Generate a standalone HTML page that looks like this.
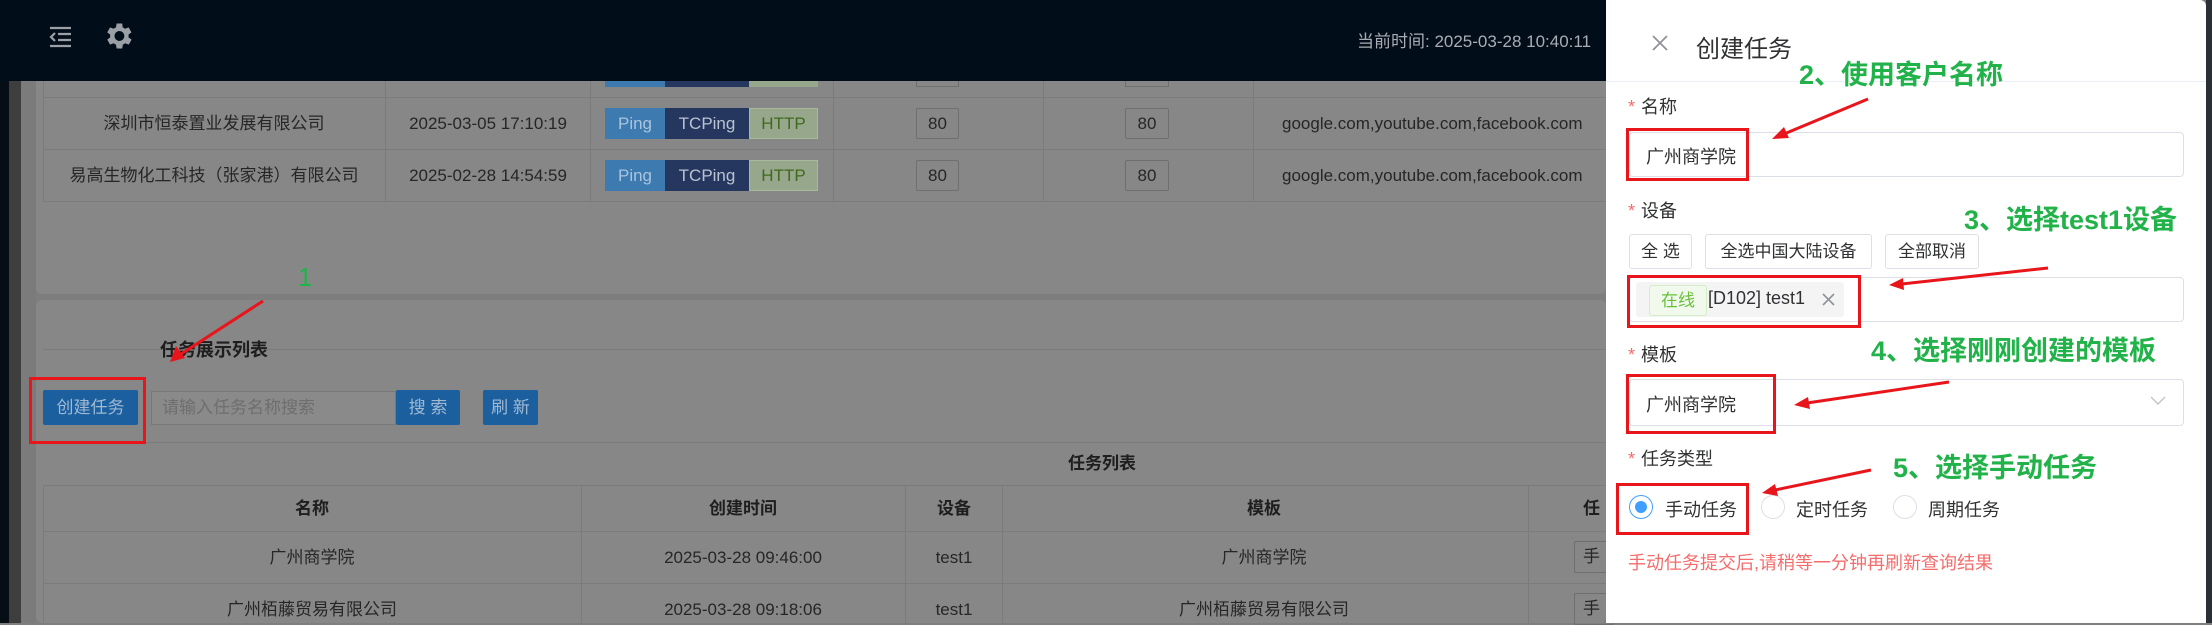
<!DOCTYPE html>
<html><head><meta charset="utf-8"><style>
*{margin:0;padding:0;box-sizing:border-box}
body{width:2212px;height:623px;overflow:hidden;position:relative;background:#7e7e7e;font-family:"Liberation Sans","Noto Sans CJK SC",sans-serif;color:#262626}
.a{position:absolute}
.t{position:absolute;white-space:nowrap;font-size:17px;line-height:20px}
.c{transform:translateX(-50%)}
.hl{position:absolute;height:1px;background:#7b7b7b}
.vl{position:absolute;width:1px;background:#7b7b7b}
.g{color:#22b24a;font-weight:bold;font-size:27px;position:absolute;white-space:nowrap;line-height:30px}
.rb{position:absolute;border:3px solid #e8151b}
.lab{position:absolute;font-size:18px;color:#303133;white-space:nowrap}
.lab b{color:#f56c6c;font-weight:normal;margin-right:6px}
.inp{position:absolute;border:1px solid #dcdfe6;border-radius:4px;background:#fff}
.btn{position:absolute;border:1px solid #dcdfe6;border-radius:3px;background:#fff;font-size:17px;color:#303133;text-align:center;line-height:33px}
</style></head><body>
<div class="a" style="left:0;top:0;width:9px;height:623px;background:#070d14"></div>
<div class="a" style="left:9px;top:81px;width:12px;height:542px;background:#3e3e3e"></div>
<div class="a" style="left:21px;top:81px;width:15px;height:542px;background:#7b7b7b"></div>
<div class="a" style="left:36px;top:81px;width:1570px;height:213px;background:#878787;border-radius:0 0 6px 6px"></div>
<div class="a" style="left:36px;top:300px;width:1570px;height:323px;background:#878787;border-radius:6px"></div>
<div class="hl" style="left:43px;top:97px;width:1563px"></div>
<div class="hl" style="left:43px;top:149px;width:1563px"></div>
<div class="hl" style="left:43px;top:201px;width:1563px"></div>
<div class="vl" style="left:43px;top:81px;height:120px"></div>
<div class="vl" style="left:385px;top:81px;height:120px"></div>
<div class="vl" style="left:590px;top:81px;height:120px"></div>
<div class="vl" style="left:833px;top:81px;height:120px"></div>
<div class="vl" style="left:1043px;top:81px;height:120px"></div>
<div class="vl" style="left:1253px;top:81px;height:120px"></div>
<div class="t c" style="left:214px;top:114px">深圳市恒泰置业发展有限公司</div>
<div class="t c" style="left:214px;top:166px">易高生物化工科技（张家港）有限公司</div>
<div class="t c" style="left:488px;top:114px">2025-03-05 17:10:19</div>
<div class="t c" style="left:488px;top:166px">2025-02-28 14:54:59</div>
<div class="a" style="left:605px;top:81px;width:60px;height:6px;background:#3d7ab0"></div>
<div class="a" style="left:665px;top:81px;width:84px;height:6px;background:#25375f"></div>
<div class="a" style="left:749px;top:81px;width:69px;height:6px;background:#97a78c"></div>
<div class="a" style="left:916px;top:81px;width:43px;height:6px;border:1px solid #6f6f6f;border-top:0"></div>
<div class="a" style="left:1125px;top:81px;width:44px;height:6px;border:1px solid #6f6f6f;border-top:0"></div>
<div class="a" style="left:605px;top:108px;width:60px;height:31px;background:#3d7ab0;color:#a8c4de;font-size:17px;line-height:31px;text-align:center">Ping</div>
<div class="a" style="left:665px;top:108px;width:84px;height:31px;background:#25375f;color:#b9c2d2;font-size:17px;line-height:31px;text-align:center">TCPing</div>
<div class="a" style="left:749px;top:108px;width:69px;height:31px;background:#97a78c;border:1px solid #a9b99c;color:#3f6a1d;font-size:17px;line-height:29px;text-align:center">HTTP</div>
<div class="a" style="left:605px;top:160px;width:60px;height:31px;background:#3d7ab0;color:#a8c4de;font-size:17px;line-height:31px;text-align:center">Ping</div>
<div class="a" style="left:665px;top:160px;width:84px;height:31px;background:#25375f;color:#b9c2d2;font-size:17px;line-height:31px;text-align:center">TCPing</div>
<div class="a" style="left:749px;top:160px;width:69px;height:31px;background:#97a78c;border:1px solid #a9b99c;color:#3f6a1d;font-size:17px;line-height:29px;text-align:center">HTTP</div>
<div class="a" style="left:916px;top:108px;width:43px;height:31px;border:1px solid #6f6f6f;border-radius:2px;font-size:17px;line-height:29px;text-align:center">80</div>
<div class="a" style="left:1125px;top:108px;width:44px;height:31px;border:1px solid #6f6f6f;border-radius:2px;font-size:17px;line-height:29px;text-align:center">80</div>
<div class="a" style="left:916px;top:160px;width:43px;height:31px;border:1px solid #6f6f6f;border-radius:2px;font-size:17px;line-height:29px;text-align:center">80</div>
<div class="a" style="left:1125px;top:160px;width:44px;height:31px;border:1px solid #6f6f6f;border-radius:2px;font-size:17px;line-height:29px;text-align:center">80</div>
<div class="t" style="left:1282px;top:114px">google.com,youtube.com,facebook.com</div>
<div class="t" style="left:1282px;top:166px">google.com,youtube.com,facebook.com</div>
<div class="g" style="left:298px;top:262px;font-weight:normal;font-size:26px">1</div>
<div class="hl" style="left:43px;top:349px;width:1563px"></div>
<div class="t" style="left:160px;top:340px;font-size:18px;font-weight:bold;color:#1e1e1e">任务展示列表</div>
<div class="a" style="left:43px;top:390px;width:95px;height:35px;background:#1c5f9f;border-radius:2px;color:#9fb9d3;font-size:17px;line-height:35px;text-align:center">创建任务</div>
<div class="a" style="left:151px;top:391px;width:245px;height:34px;border:1px solid #777;background:#8a8a8a;color:#6e6e6e;font-size:17px;line-height:32px;padding-left:10px">请输入任务名称搜索</div>
<div class="a" style="left:396px;top:390px;width:64px;height:35px;background:#1c5f9f;border-radius:2px;color:#9fb9d3;font-size:17px;line-height:35px;text-align:center">搜 索</div>
<div class="a" style="left:483px;top:390px;width:55px;height:35px;background:#1c5f9f;border-radius:2px;color:#9fb9d3;font-size:17px;line-height:35px;text-align:center">刷 新</div>
<div class="hl" style="left:43px;top:442px;width:1563px"></div>
<div class="t c" style="left:1102px;top:454px;font-weight:bold;color:#1e1e1e">任务列表</div>
<div class="hl" style="left:43px;top:485px;width:1563px"></div>
<div class="hl" style="left:43px;top:531px;width:1563px"></div>
<div class="hl" style="left:43px;top:583px;width:1563px"></div>
<div class="vl" style="left:43px;top:485px;height:138px"></div>
<div class="vl" style="left:581px;top:485px;height:138px"></div>
<div class="vl" style="left:905px;top:485px;height:138px"></div>
<div class="vl" style="left:1002px;top:485px;height:138px"></div>
<div class="vl" style="left:1528px;top:485px;height:138px"></div>
<div class="t c" style="left:312px;top:499px;font-weight:bold;color:#1e1e1e">名称</div>
<div class="t c" style="left:743px;top:499px;font-weight:bold;color:#1e1e1e">创建时间</div>
<div class="t c" style="left:954px;top:499px;font-weight:bold;color:#1e1e1e">设备</div>
<div class="t c" style="left:1264px;top:499px;font-weight:bold;color:#1e1e1e">模板</div>
<div class="t" style="left:1583px;top:499px;font-weight:bold;color:#1e1e1e">任</div>
<div class="t c" style="left:312px;top:548px">广州商学院</div>
<div class="t c" style="left:743px;top:548px">2025-03-28 09:46:00</div>
<div class="t c" style="left:954px;top:548px">test1</div>
<div class="t c" style="left:1264px;top:548px">广州商学院</div>
<div class="t c" style="left:312px;top:600px">广州栢藤贸易有限公司</div>
<div class="t c" style="left:743px;top:600px">2025-03-28 09:18:06</div>
<div class="t c" style="left:954px;top:600px">test1</div>
<div class="t c" style="left:1264px;top:600px">广州栢藤贸易有限公司</div>
<div class="a" style="left:1574px;top:541px;width:40px;height:32px;border:1px solid #6f6f6f;border-radius:2px;font-size:17px;line-height:30px;padding-left:8px">手</div>
<div class="a" style="left:1574px;top:593px;width:40px;height:32px;border:1px solid #6f6f6f;border-radius:2px;font-size:17px;line-height:30px;padding-left:8px">手</div>
<div class="rb" style="left:29px;top:377px;width:117px;height:67px"></div>
<div class="a" style="left:0;top:0;width:1606px;height:81px;background:#010d19"></div>
<svg class="a" style="left:49px;top:25px" width="24" height="24" viewBox="0 0 24 24"><g stroke="#9aa0a6" stroke-width="2.2" fill="none"><path d="M1 3h21M9 9h13M9 15h13M1 21h21"/><path d="M6 8l-4 4 4 4"/></g></svg>
<svg class="a" style="left:101px;top:19px" width="34" height="34" viewBox="0 0 24 24"><path fill="#9aa0a6" d="M19.4 13a7.5 7.5 0 000-2l2.1-1.6-2-3.5-2.5 1a7.4 7.4 0 00-1.7-1L15 3.2h-4l-.4 2.7a7.4 7.4 0 00-1.7 1l-2.5-1-2 3.5L6.5 11a7.5 7.5 0 000 2l-2.1 1.6 2 3.5 2.5-1a7.4 7.4 0 001.7 1l.4 2.7h4l.4-2.7a7.4 7.4 0 001.7-1l2.5 1 2-3.5zM13 15.5A3.5 3.5 0 1113 8.5a3.5 3.5 0 010 7z"/></svg>
<div class="t" style="left:1357px;top:32px;color:#a9adb3;font-size:17px">当前时间: 2025-03-28 10:40:11</div>
<svg class="a" style="left:0;top:0" width="1606" height="623"><path d="M263 301L178 356" stroke="#e8151b" stroke-width="3"/><path d="M170 362l6-16 9 12z" fill="#e8151b"/></svg>
<div class="a" style="left:1606px;top:0;width:600px;height:623px;background:#fff;border-radius:0 6px 0 0"></div>
<div class="a" style="left:2206px;top:0;width:6px;height:623px;background:#2a2f36"></div>
<svg class="a" style="left:1652px;top:35px" width="16" height="16"><path d="M1 1L15 15M15 1L1 15" stroke="#909399" stroke-width="1.8"/></svg>
<div class="a" style="left:1696px;top:29px;font-size:24px;color:#303133;white-space:nowrap">创建任务</div>
<div class="hl" style="left:1606px;top:81px;width:600px;background:#ebeef5"></div>
<div class="lab" style="left:1628px;top:93px"><b>*</b>名称</div>
<div class="inp" style="left:1629px;top:132px;width:555px;height:45px"></div>
<div class="a" style="left:1646px;top:143px;font-size:18px;color:#303133">广州商学院</div>
<div class="lab" style="left:1628px;top:197px"><b>*</b>设备</div>
<div class="btn" style="left:1629px;top:234px;width:63px;height:35px">全 选</div>
<div class="btn" style="left:1705px;top:234px;width:167px;height:35px">全选中国大陆设备</div>
<div class="btn" style="left:1885px;top:234px;width:94px;height:35px">全部取消</div>
<div class="inp" style="left:1629px;top:277px;width:555px;height:45px"></div>
<div class="a" style="left:1636px;top:282px;width:208px;height:35px;background:#f4f4f5;border-radius:3px"></div>
<div class="a" style="left:1649px;top:285px;width:58px;height:31px;background:#f0f9eb;border:1px solid #d5eec8;border-radius:3px;color:#67c23a;font-size:17px;text-align:center;line-height:29px">在线</div>
<div class="a" style="left:1708px;top:288px;font-size:18px;color:#303133;white-space:nowrap">[D102] test1</div>
<svg class="a" style="left:1822px;top:293px" width="13" height="13"><path d="M1 1L12 12M12 1L1 12" stroke="#909399" stroke-width="1.6"/></svg>
<div class="lab" style="left:1628px;top:341px"><b>*</b>模板</div>
<div class="inp" style="left:1629px;top:379px;width:555px;height:47px"></div>
<div class="a" style="left:1646px;top:391px;font-size:18px;color:#303133">广州商学院</div>
<svg class="a" style="left:2150px;top:396px" width="16" height="10"><path d="M1 1l7 7 7-7" stroke="#c0c4cc" stroke-width="1.4" fill="none"/></svg>
<div class="lab" style="left:1628px;top:445px"><b>*</b>任务类型</div>
<div class="a" style="left:1629px;top:495px;width:24px;height:24px;border-radius:50%;border:1px solid #409eff;background:#fff"></div>
<div class="a" style="left:1635px;top:501px;width:12px;height:12px;border-radius:50%;background:#409eff"></div>
<div class="a" style="left:1665px;top:496px;font-size:18px;color:#303133">手动任务</div>
<div class="a" style="left:1761px;top:495px;width:24px;height:24px;border-radius:50%;border:1px solid #dcdfe6"></div>
<div class="a" style="left:1796px;top:496px;font-size:18px;color:#303133">定时任务</div>
<div class="a" style="left:1893px;top:495px;width:24px;height:24px;border-radius:50%;border:1px solid #dcdfe6"></div>
<div class="a" style="left:1928px;top:496px;font-size:18px;color:#303133">周期任务</div>
<div class="a" style="left:1628px;top:549px;font-size:18px;color:#f56c6c;white-space:nowrap">手动任务提交后,请稍等一分钟再刷新查询结果</div>
<div class="rb" style="left:1626px;top:128px;width:123px;height:53px"></div>
<div class="rb" style="left:1627px;top:275px;width:234px;height:53px"></div>
<div class="rb" style="left:1626px;top:374px;width:150px;height:60px"></div>
<div class="rb" style="left:1616px;top:483px;width:133px;height:52px"></div>
<div class="g" style="left:1799px;top:60px">2、使用客户名称</div>
<div class="g" style="left:1964px;top:205px">3、选择test1设备</div>
<div class="g" style="left:1871px;top:336px">4、选择刚刚创建的模板</div>
<div class="g" style="left:1893px;top:453px">5、选择手动任务</div>
<svg class="a" style="left:0;top:0" width="2212" height="623">
<g stroke="#e8151b" stroke-width="3" fill="#e8151b">
<path d="M1868 99L1784 134"/><path d="M1772 139l12-12 5 11z" stroke="none"/>
<path d="M2048 268L1902 284"/><path d="M1889 285l14-7 1 12z" stroke="none"/>
<path d="M1949 382L1807 403"/><path d="M1794 405l14-8 2 12z" stroke="none"/>
<path d="M1871 470L1775 490"/><path d="M1762 493l13-9 3 12z" stroke="none"/>
</g></svg>
</body></html>
